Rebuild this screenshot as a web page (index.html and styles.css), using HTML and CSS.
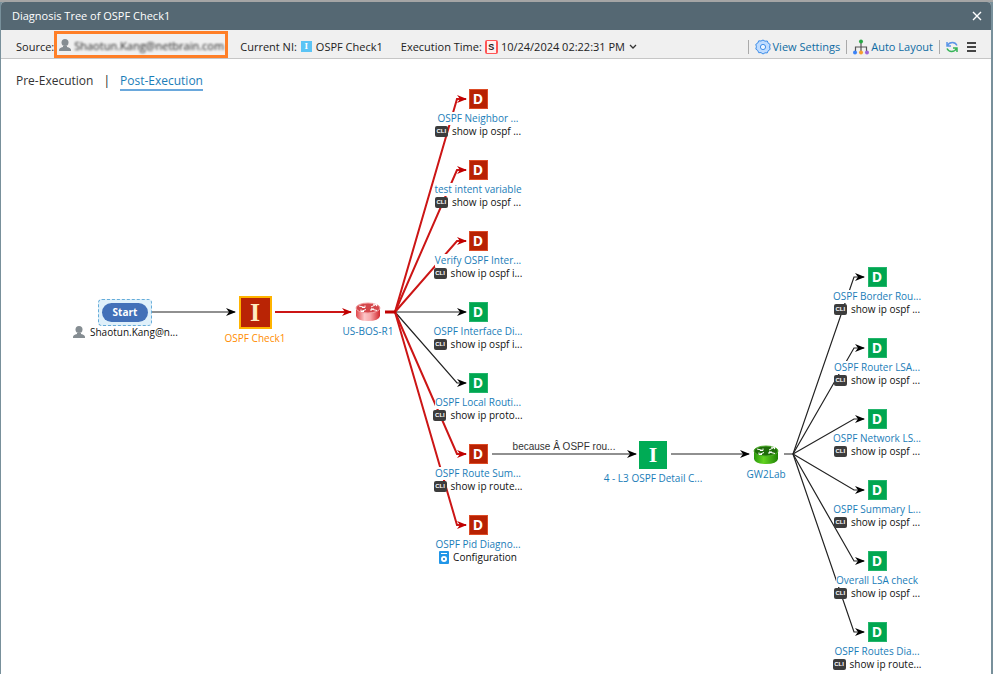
FILE: index.html
```html
<!DOCTYPE html>
<html lang="en">
<head>
<meta charset="utf-8">
<title>Diagnosis Tree of OSPF Check1</title>
<link rel="stylesheet" href="styles.css">
</head>
<body>
<svg class="defs" aria-hidden="true">
  <defs>
    <marker id="arrow-black" viewBox="0 0 10 8" refX="9" refY="4" markerWidth="10" markerHeight="8" markerUnits="userSpaceOnUse" orient="auto"><path d="M0 0L10 4L0 8L3 4z" fill="#000"/></marker>
    <marker id="arrow-red" viewBox="0 0 10 8" refX="9" refY="4" markerWidth="10" markerHeight="8" markerUnits="userSpaceOnUse" orient="auto"><path d="M0 0L10 4L0 8L3 4z" fill="#c00000"/></marker>
    <linearGradient id="red-side"><stop offset="0" stop-color="#e0474b"/><stop offset=".35" stop-color="#fcc6c8"/><stop offset=".6" stop-color="#f7a9ab"/><stop offset="1" stop-color="#d2282d"/></linearGradient>
    <linearGradient id="green-side"><stop offset="0" stop-color="#2a9a0c"/><stop offset=".4" stop-color="#63d321"/><stop offset="1" stop-color="#1f8205"/></linearGradient>
    <symbol id="person" viewBox="0 0 14 14"><circle cx="7" cy="4.500" r="3.500"/><path d="M1 13v-1q0-2 4-3V8h4v1q4 1 4 3v1z"/></symbol>
    <symbol id="router-top" viewBox="0 0 26 20"><path d="M4 4l6 1.500M10 3.500v2H7M16 5l5-2.500M18 2.200h3.500v2M11 7.500L6 9.500M6 7.500v2h3M22 8.500L16 7M16 9V7h3" fill="none" stroke="#fff"/></symbol>
  </defs>
</svg>
<main class="window">
  <header class="titlebar">
    <h1>Diagnosis Tree of OSPF Check1</h1>
    <button class="close" type="button" aria-label="Close"><svg width="10" height="10" viewBox="0 0 10 10"><path d="M1 1l8 8M9 1L1 9" stroke="#fff" stroke-width="1.4"/></svg></button>
  </header>
  <div class="toolbar">
    <div class="field">
      <span class="source-label">Source:</span>
      <span class="source"><svg class="person" width="14" height="14"><use href="#person"/></svg><span class="redacted">Shaotun.Kang@netbrain.com</span></span>
    </div>
    <div class="field intent"><span>Current NI:</span><span class="ni-icon">I</span><span>OSPF Check1</span></div>
    <div class="field time">
      <label for="run-time">Execution Time:</label>
      <span class="s-icon">S</span>
      <select id="run-time"><option>10/24/2024 02:22:31 PM</option></select>
      <svg class="chevron" width="8" height="6" viewBox="0 0 8 6"><path d="M1 1l3 3 3-3" fill="none" stroke="#333" stroke-width="1.3"/></svg>
    </div>
    <div class="actions">
      <button type="button" class="action"><svg width="16" height="16" viewBox="0 0 16 16"><path d="M8 1l2 1.200 2.300-.2.900 2.200 2 1.300-.6 2.500.6 2.300-2 1.400-.9 2.200-2.300-.1L8 15l-2-1.400-2.300.1-.9-2.200-2-1.400.6-2.300-.6-2.500 2-1.300.9-2.200 2.300.2z" fill="#bfdcff" stroke="#3d8de8"/><circle cx="8" cy="8" r="2.600" fill="#eef6ff" stroke="#3d8de8"/></svg>View Settings</button>
      <button type="button" class="action"><svg width="16" height="16" viewBox="0 0 16 16"><path d="M8 2v11M2.500 13V8h11v5" fill="none" stroke="#555" stroke-width="1.200"/><circle cx="8" cy="2.500" r="2" fill="#28a745"/><circle cx="2" cy="13.500" r="2" fill="#3b82f6"/><circle cx="8" cy="13.500" r="2" fill="#f59e2d"/><circle cx="14" cy="13.500" r="2" fill="#9b63d8"/></svg>Auto Layout</button>
      <button type="button" class="action" aria-label="Refresh"><svg width="12" height="12" viewBox="0 0 12 12"><path d="M1 1v4h4M1.500 4.500q1.500-3 5-3 3 0 4.500 3" fill="none" stroke="#5b95e8" stroke-width="1.500"/><path d="M11 11V7H7M10.500 7.500q-1.500 3-5 3-3 0-4.500-3" fill="none" stroke="#35b457" stroke-width="1.500"/></svg></button>
      <button type="button" class="menu" aria-label="Menu"><svg width="9" height="10" viewBox="0 0 9 10"><path d="M0 1h9M0 5h9M0 9h9" stroke="#444" stroke-width="2"/></svg></button>
    </div>
  </div>
  <section class="stage">
    <nav class="tabs"><a href="#pre">Pre-Execution</a><span class="bar">|</span><a href="#post" class="active">Post-Execution</a></nav>

    <svg class="edges" width="991" height="615" viewBox="1 59 991 615" aria-hidden="true">
      <g class="black">
        <path d="M152 312H235"/>
        <path d="M395 312H466"/><path d="M395 312L457 383H466"/>
        <path d="M492 454H636"/><path d="M671 454H749"/>
        <path d="M784 454H793L854 277H864"/><path d="M793 454L854 348H864"/><path d="M793 454L854 419H864"/>
        <path d="M793 454L854 490H864"/><path d="M793 454L854 561H864"/><path d="M793 454L854 632H864"/>
      </g>
      <g class="red">
        <path d="M275 312H351"/>
        <path d="M395 312L457 99H466"/><path d="M395 312L457 170H466"/><path d="M395 312L457 241H466"/>
        <path d="M395 312L457 454H466"/><path d="M395 312L457 525H466"/>
      </g>
      <path class="stub" d="M385 312H396"/>
    </svg>

    <div class="node start"><span class="halo"><span class="pill">Start</span></span></div>
    <div class="node owner"><svg class="person" width="14" height="14"><use href="#person"/></svg>Shaotun.Kang@n...</div>
    <div class="node check"><span class="tile selected">I</span><a href="#check">OSPF Check1</a></div>
    <div class="node router-red">
      <svg width="26" height="20" viewBox="0 0 26 20"><path d="M1 6v8q1 5 12 5t12-5V6z" fill="url(#red-side)"/><ellipse cx="13" cy="6" rx="12" ry="5" fill="#d4474b" stroke="#f3a3a5"/><use href="#router-top" width="26" height="20"/></svg>
      <a href="#us-bos-r1">US-BOS-R1</a>
    </div>
    <span class="node reason">because Â OSPF rou...</span>
    <div class="node detail"><span class="tile">I</span><a href="#detail">4 - L3 OSPF Detail C...</a></div>
    <div class="node router-green">
      <svg width="26" height="20" viewBox="0 0 26 20"><path d="M1 6v8q1 5 12 5t12-5V6z" fill="url(#green-side)"/><ellipse cx="13" cy="6" rx="12" ry="5" fill="#1f6d0a" stroke="#4fae2a"/><use href="#router-top" width="26" height="20"/></svg>
      <a href="#gw2lab">GW2Lab</a>
    </div>

    <ul class="leaves left">
      <li><span class="d alert">D</span><a href="#d1">OSPF Neighbor ...</a><span class="cmd"><i>CLI</i>show ip ospf ...</span></li>
      <li><span class="d alert">D</span><a href="#d2">test intent variable</a><span class="cmd"><i>CLI</i>show ip ospf ...</span></li>
      <li><span class="d alert">D</span><a href="#d3">Verify OSPF Inter...</a><span class="cmd"><i>CLI</i>show ip ospf i...</span></li>
      <li><span class="d">D</span><a href="#d4">OSPF Interface Di...</a><span class="cmd"><i>CLI</i>show ip ospf i...</span></li>
      <li><span class="d">D</span><a href="#d5">OSPF Local Routi...</a><span class="cmd"><i>CLI</i>show ip proto...</span></li>
      <li><span class="d alert">D</span><a href="#d6">OSPF Route Sum...</a><span class="cmd"><i>CLI</i>show ip route...</span></li>
      <li><span class="d alert">D</span><a href="#d7">OSPF Pid Diagno...</a><span class="cmd"><svg width="10" height="13" viewBox="0 0 10 13"><rect width="10" height="13" rx="1" fill="#2196e8"/><path d="M2 2.500h6" stroke="#fff"/><circle cx="5" cy="8" r="3" fill="#fff"/><circle cx="5" cy="8" r="1" fill="#1474c0"/></svg>Configuration</span></li>
    </ul>
    <ul class="leaves right">
      <li><span class="d">D</span><a href="#e1">OSPF Border Rou...</a><span class="cmd"><i>CLI</i>show ip ospf ...</span></li>
      <li><span class="d">D</span><a href="#e2">OSPF Router LSA...</a><span class="cmd"><i>CLI</i>show ip ospf ...</span></li>
      <li><span class="d">D</span><a href="#e3">OSPF Network LS...</a><span class="cmd"><i>CLI</i>show ip ospf ...</span></li>
      <li><span class="d">D</span><a href="#e4">OSPF Summary L...</a><span class="cmd"><i>CLI</i>show ip ospf ...</span></li>
      <li><span class="d">D</span><a href="#e5">Overall LSA check</a><span class="cmd"><i>CLI</i>show ip ospf ...</span></li>
      <li><span class="d">D</span><a href="#e6">OSPF Routes Dia...</a><span class="cmd"><i>CLI</i>show ip route...</span></li>
    </ul>
  </section>
</main>
</body>
</html>
```
FILE: styles.css
```css
* { box-sizing: border-box; }
body {
  margin: 0;
  min-height: 100vh;
  display: flex;
  padding: 2px 2px 0 1px;
  background: linear-gradient(#a5a5a5 0 2px, #78909b 2px);
  font: 11px/16px "Open Sans", "Noto Sans", sans-serif;
  color: #222;
  overflow: hidden;
}
a { color: #1a7db8; text-decoration: none; }
button, select { font: inherit; color: inherit; border: 0; background: none; padding: 0; margin: 0; }
.defs { position: absolute; width: 0; height: 0; }
.window { flex: 1; display: flex; flex-direction: column; background: #fff; border-radius: 4px 4px 0 0; overflow: hidden; }

.titlebar { display: flex; align-items: center; justify-content: space-between; height: 28px; padding: 0 9px 0 11px; background: #556873; color: #fff; }
.titlebar h1 { margin: 0; font-size: 11px; font-weight: 400; }
.close { display: flex; }

.toolbar { display: flex; align-items: center; height: 29px; padding-right: 15px; background: #f0f0f0; border-bottom: 1px solid #c6c6c6; white-space: nowrap; }
.field { display: flex; align-items: center; }
.source-label { padding: 5px 0 0 15px; }
.source { display: flex; align-items: center; gap: 2px; width: 174px; height: 27px; padding: 1px 0 0 1px; border: 3px solid #ff7f27; }
.person { fill: #858d92; flex: none; }
.redacted { padding-top: 2px; font-weight: 400; color: #222; filter: blur(1px); }
.intent, .time, .actions { padding-top: 5px; }
.intent { margin-left: 12px; gap: 4px; }
.time { margin-left: 18px; gap: 3px; }
.ni-icon { width: 11px; height: 11px; background: #5bc4f5; color: #fff; font: bold 9px/11px "Liberation Serif", serif; text-align: center; }
.s-icon { width: 13px; height: 14px; border: 1px solid #f55; border-width: 1px 2px; border-radius: 2px; background: #fff0ee; font: bold 9px/12px "Liberation Sans", sans-serif; text-align: center; }
select { appearance: none; }
.actions { display: flex; align-items: center; margin-left: auto; }
.action { display: flex; align-items: center; gap: 2px; height: 14px; padding: 0 6px; border-left: 1px solid #aaa; color: #0e6ba3; }
.menu { display: flex; padding-left: 3px; }

.stage { position: relative; flex: 1; overflow: hidden; }
.tabs { display: flex; gap: 10px; padding: 13px 15px; font-size: 12px; line-height: 17px; }
.tabs a { color: #333; }
.tabs .active { color: #1a7db8; font-weight: 500; border-bottom: 2px solid #6aa8dc; }

.edges { position: absolute; left: 0; top: 0; }
.edges path { fill: none; }
.black path { stroke: #222; stroke-width: 1.2; marker-end: url(#arrow-black); }
.red path { stroke: #cc1515; stroke-width: 2; marker-end: url(#arrow-red); }
.edges .stub { stroke: #c00000; stroke-width: 3; }

.node { position: absolute; display: flex; flex-direction: column; align-items: center; width: 120px; font-size: 10px; line-height: 14px; white-space: nowrap; }
.start { left: 64px; top: 240px; }
.halo { padding: 3px; border: 1px dashed #65acd9; border-radius: 4px; background: #dff0fa; }
.pill { display: block; width: 46px; height: 19px; border-radius: 10px; background: #4270b8; color: #fff; font-weight: 700; line-height: 18px; text-align: center; }
.owner { left: 71px; top: 266px; flex-direction: row; gap: 4px; color: #111; }
.check { left: 194px; top: 237px; gap: 2px; }
.check a { color: #ff8c00; }
.tile { width: 28px; height: 28px; background: #00ab55; color: #fff; font: bold 22px/27px "Liberation Serif", serif; text-align: center; }
.selected { width: 33px; height: 33px; border: 2px solid #ffb400; background: #b92405; color: #ffecc0; font-size: 26px; line-height: 29px; }
.router-red { left: 307px; top: 243px; gap: 2px; }
.reason { left: 503px; top: 381px; color: #333; font-family: "Liberation Sans", sans-serif; }
.detail { left: 592px; top: 382px; gap: 2px; }
.router-green { left: 705px; top: 386px; gap: 2px; }

.leaves { position: absolute; margin: 0; padding: 0; list-style: none; font-size: 10px; line-height: 13px; white-space: nowrap; }
.leaves li { display: flex; flex-direction: column; align-items: center; width: 120px; height: 71px; }
.left { left: 417px; top: 30px; }
.right { left: 816px; top: 208px; }
.leaves a { margin-top: 3px; background: #fff; }
.d { width: 19px; height: 20px; border: 1px solid #23b56c; background: #00a650; color: #fff; font: bold 14px/18px "Open Sans", sans-serif; text-align: center; }
.alert { background: #b82203; border-color: #dc4b26; }
.cmd { display: flex; align-items: center; gap: 4px; color: #111; }
.cmd i { width: 13px; height: 11px; border-radius: 2px; background: #3c3c3c; color: #fff; font: bold 6px/11px "Liberation Sans", sans-serif; text-align: center; }
```
